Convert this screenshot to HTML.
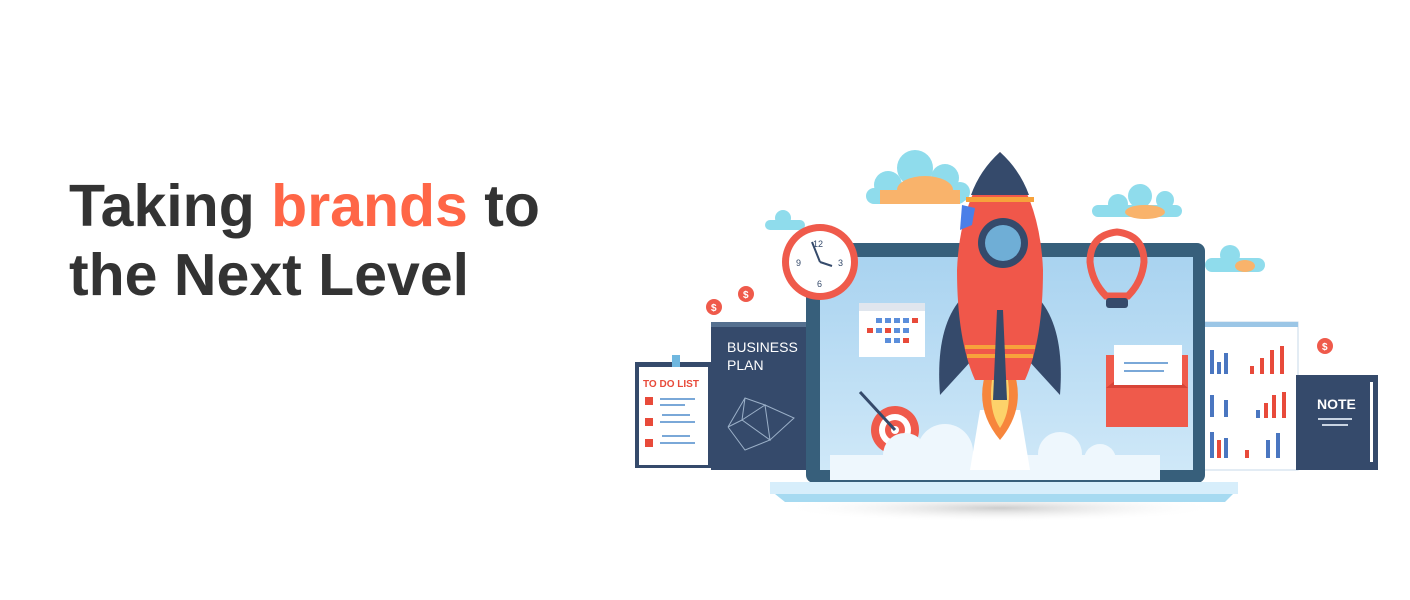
<!DOCTYPE html>
<html><head><meta charset="utf-8"><style>
html,body{margin:0;padding:0;background:#fff;width:1410px;height:600px;overflow:hidden}
h1{position:absolute;left:69px;top:172px;margin:0;font-family:"Liberation Sans",sans-serif;font-weight:bold;font-size:59px;line-height:69px;color:#333;letter-spacing:0}
h1 span{color:#ff6647}
svg{position:absolute;left:0;top:0}
</style></head><body>
<h1>Taking <span>brands</span> to<br>the Next Level</h1>
<svg width="1410" height="600" viewBox="0 0 1410 600" font-family="Liberation Sans, sans-serif">
<defs>
<linearGradient id="scr" x1="0" y1="0" x2="0" y2="1"><stop offset="0" stop-color="#a9d3f0"/><stop offset="1" stop-color="#cfe8f8"/></linearGradient>
<radialGradient id="sh"><stop offset="0" stop-color="#ccc"/><stop offset="1" stop-color="#fff" stop-opacity="0"/></radialGradient>
</defs>
<ellipse cx="1000" cy="508" rx="220" ry="14" fill="url(#sh)"/>
<!-- clouds top -->
<g fill="#8fdcec"><circle cx="888" cy="185" r="14"/><circle cx="915" cy="168" r="18"/><circle cx="945" cy="178" r="14"/><circle cx="960" cy="192" r="10"/><rect x="866" y="188" width="100" height="16" rx="8"/>
<circle cx="1118" cy="204" r="10"/><circle cx="1140" cy="196" r="12"/><circle cx="1165" cy="200" r="9"/><rect x="1092" y="205" width="90" height="12" rx="6"/>
<circle cx="783" cy="218" r="8"/><rect x="765" y="220" width="40" height="10" rx="5"/>
<circle cx="1230" cy="255" r="10"/><rect x="1205" y="258" width="60" height="14" rx="7"/></g>
<g fill="#f9b36b"><ellipse cx="925" cy="190" rx="28" ry="14"/><rect x="880" y="190" width="80" height="14"/>
<ellipse cx="1145" cy="212" rx="20" ry="7"/><ellipse cx="1245" cy="266" rx="10" ry="6"/></g>
<!-- left books -->
<rect x="711" y="322" width="100" height="148" fill="#354a6b"/><rect x="711" y="322" width="100" height="5" fill="#55708f"/>
<text x="727" y="352" fill="#fff" font-size="14">BUSINESS</text><text x="727" y="370" fill="#fff" font-size="14">PLAN</text>
<g stroke="#9bb0c8" stroke-width="1" fill="none"><path d="M728 427 L745 398 L765 405 L794 418 L770 440 L745 450 L728 427 M745 398 L742 420 L765 405 L770 440 L742 420 L728 427"/></g>
<rect x="635" y="362" width="77" height="106" fill="#354a6b"/><rect x="639" y="367" width="69" height="98" fill="#fff"/>
<rect x="672" y="355" width="8" height="12" fill="#6fb7df"/>
<text x="643" y="387" fill="#e84a3a" font-size="10" font-weight="bold">TO DO LIST</text>
<g fill="#e84a3a"><rect x="645" y="397" width="8" height="8"/><rect x="645" y="418" width="8" height="8"/><rect x="645" y="439" width="8" height="8"/></g>
<g fill="#7aa8d8"><rect x="660" y="398" width="35" height="2"/><rect x="660" y="404" width="25" height="2"/><rect x="662" y="414" width="28" height="2"/><rect x="660" y="421" width="35" height="2"/><rect x="662" y="435" width="28" height="2"/><rect x="660" y="442" width="35" height="2"/></g>
<!-- right chart panel -->
<rect x="1200" y="322" width="98" height="148" fill="#fff" stroke="#c7d8e8"/><rect x="1200" y="322" width="98" height="5" fill="#9bc6e6"/>
<g fill="#4a76c0"><rect x="1210" y="350" width="4" height="24"/><rect x="1217" y="362" width="4" height="12"/><rect x="1224" y="353" width="4" height="21"/><rect x="1210" y="395" width="4" height="22"/><rect x="1224" y="400" width="4" height="17"/><rect x="1210" y="432" width="4" height="26"/><rect x="1224" y="438" width="4" height="20"/><rect x="1266" y="440" width="4" height="18"/><rect x="1276" y="433" width="4" height="25"/><rect x="1256" y="410" width="4" height="8"/></g>
<g fill="#e84a3a"><rect x="1250" y="366" width="4" height="8"/><rect x="1260" y="358" width="4" height="16"/><rect x="1270" y="350" width="4" height="24"/><rect x="1280" y="346" width="4" height="28"/><rect x="1264" y="403" width="4" height="15"/><rect x="1272" y="395" width="4" height="23"/><rect x="1282" y="392" width="4" height="26"/><rect x="1245" y="450" width="4" height="8"/><rect x="1217" y="440" width="4" height="18"/></g>
<rect x="1296" y="375" width="82" height="95" fill="#354a6b"/><rect x="1370" y="382" width="3" height="80" fill="#fff"/>
<text x="1317" y="409" fill="#fff" font-size="14" font-weight="bold">NOTE</text>
<rect x="1318" y="418" width="34" height="2" fill="#c9d4e2"/><rect x="1322" y="424" width="26" height="2" fill="#c9d4e2"/>
<!-- laptop -->
<rect x="806" y="243" width="399" height="240" rx="8" fill="#375f7b"/>
<rect x="820" y="257" width="373" height="213" fill="url(#scr)"/>
<rect x="770" y="482" width="468" height="12" fill="#d7eefb"/><path d="M775 494 L1233 494 L1225 502 L785 502 Z" fill="#a6daf1"/>
<!-- screen items -->
<rect x="859" y="303" width="66" height="54" fill="#fff"/><rect x="859" y="303" width="66" height="8" fill="#e0e6ee"/>
<g fill="#5b8edb"><rect x="876" y="318" width="6" height="5"/><rect x="885" y="318" width="6" height="5"/><rect x="894" y="318" width="6" height="5"/><rect x="903" y="318" width="6" height="5"/><rect x="876" y="328" width="6" height="5"/><rect x="894" y="328" width="6" height="5"/><rect x="903" y="328" width="6" height="5"/><rect x="885" y="338" width="6" height="5"/><rect x="894" y="338" width="6" height="5"/></g>
<g fill="#e84a3a"><rect x="867" y="328" width="6" height="5"/><rect x="885" y="328" width="6" height="5"/><rect x="903" y="338" width="6" height="5"/><rect x="912" y="318" width="6" height="5"/></g>
<rect x="1106" y="355" width="82" height="72" fill="#ef5a4b"/><path d="M1106 388 L1147 355 L1188 388 Z" fill="#d84437"/>
<rect x="1114" y="345" width="68" height="40" fill="#fff"/>
<g fill="#7aa8d8"><rect x="1124" y="362" width="44" height="2"/><rect x="1124" y="370" width="40" height="2"/></g>
<circle cx="895" cy="430" r="24" fill="#ef5a4b"/><circle cx="895" cy="430" r="16" fill="#fff"/><circle cx="895" cy="430" r="10" fill="#ef5a4b"/><circle cx="895" cy="430" r="4" fill="#fff"/>
<path d="M860 392 L895 430" stroke="#354a6b" stroke-width="3"/>
<!-- launch clouds -->
<g fill="#eef7fd"><circle cx="905" cy="455" r="22"/><circle cx="945" cy="452" r="28"/><circle cx="1060" cy="454" r="22"/><circle cx="1100" cy="460" r="16"/><rect x="830" y="455" width="330" height="25"/></g>
<path d="M980 410 L1020 410 L1030 470 L970 470 Z" fill="#fff"/>
<!-- flames -->
<path d="M985 375 Q975 410 1000 440 Q1025 410 1015 375 Z" fill="#f7863c"/><path d="M992 380 Q988 410 1000 428 Q1012 410 1008 380 Z" fill="#fdd26a"/>
<!-- rocket -->
<path d="M960 300 Q935 330 940 395 L972 360 Z" fill="#354a6b"/><path d="M1040 300 Q1065 330 1060 395 L1028 360 Z" fill="#354a6b"/>
<path d="M1000 152 Q960 195 957 270 Q957 340 975 380 L1025 380 Q1043 340 1043 270 Q1040 195 1000 152 Z" fill="#f0574a"/>
<path d="M1000 152 Q980 170 971 195 L1029 195 Q1020 170 1000 152 Z" fill="#354a6b"/>
<rect x="966" y="197" width="68" height="5" fill="#f7a23b"/>
<rect x="965" y="345" width="70" height="4" fill="#f7a23b"/><rect x="967" y="354" width="66" height="4" fill="#f7a23b"/>
<path d="M997 310 L993 400 L1007 400 L1003 310 Z" fill="#354a6b"/>
<path d="M962 205 L975 208 L972 225 L960 230 Z" fill="#4a7fe8"/>
<circle cx="1003" cy="243" r="25" fill="#354a6b"/><circle cx="1003" cy="243" r="18" fill="#6faed6"/>
<!-- clock -->
<circle cx="820" cy="262" r="38" fill="#ef5a4b"/><circle cx="820" cy="262" r="31" fill="#fff"/>
<text x="813" y="247" font-size="9" fill="#354a6b">12</text><text x="838" y="266" font-size="9" fill="#354a6b">3</text><text x="817" y="287" font-size="9" fill="#354a6b">6</text><text x="796" y="266" font-size="9" fill="#354a6b">9</text>
<path d="M820 262 L812 242 M820 262 L832 266" stroke="#354a6b" stroke-width="2"/>
<!-- bulb -->
<path d="M1117 232 Q1090 235 1090 262 Q1092 282 1106 296 L1128 296 Q1142 282 1144 262 Q1144 235 1117 232 Z" fill="none" stroke="#ef5a4b" stroke-width="7"/>
<rect x="1106" y="298" width="22" height="10" rx="3" fill="#354a6b"/>
<!-- coins -->
<g fill="#ef5a4b"><circle cx="714" cy="307" r="8"/><circle cx="746" cy="294" r="8"/><circle cx="1325" cy="346" r="8"/></g>
<g fill="#fff" font-size="10" font-weight="bold"><text x="711" y="311">$</text><text x="743" y="298">$</text><text x="1322" y="350">$</text></g>
</svg>
</body></html>
